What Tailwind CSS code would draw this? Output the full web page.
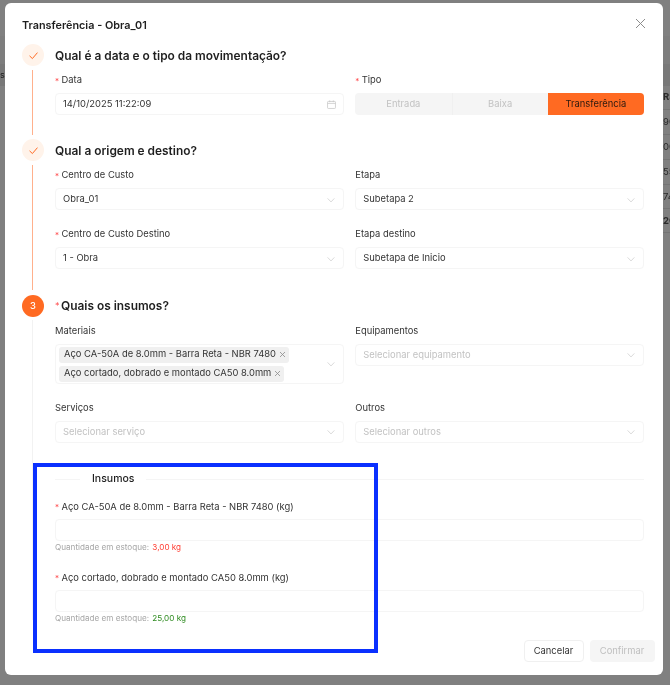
<!doctype html>
<html lang="pt-BR">
<head>
<meta charset="utf-8">
<script src="https://cdn.jsdelivr.net/npm/@tailwindcss/browser@4"></script>
<title>Transferência</title>
</head>
<body class="m-0 bg-[#808080] font-['Inter','Liberation_Sans',sans-serif]">
<div class="relative w-[670px] h-[685px] overflow-hidden bg-[#808080] blur-[0.3px]">
  <!-- page behind the modal -->
  <div class="absolute left-0 top-[36px] w-[670px] h-[28px] bg-[#7d7d7d]"></div>
  <div class="absolute left-0 top-[64px] w-[670px] h-[22px] bg-[#787878] text-[9px] leading-[22px] text-[#222]"><span class="absolute left-0">s</span></div>
  <div class="absolute left-[663px] top-[86px] w-[10px] flex flex-col text-[9.5px] text-[#2a2a2a]">
    <div class="h-[24px] leading-[22px] font-bold border-b border-[#747474]">R$</div>
    <div class="h-[25px] leading-[24px] border-b border-[#747474]">90</div>
    <div class="h-[25px] leading-[24px] border-b border-[#747474]">00</div>
    <div class="h-[25px] leading-[24px] border-b border-[#747474]">55</div>
    <div class="h-[24px] leading-[23px] border-b border-[#747474]">74</div>
    <div class="h-[24px] leading-[23px] font-bold border-b border-[#747474]">26</div>
  </div>

  <!-- modal -->
  <div class="absolute left-[5px] top-[3px] w-[658px] h-[672px] rounded-[6px] bg-white pl-[17px] pr-[19px] text-[#1f1f1f]">
    <div class="flex items-center justify-between h-[41px] pt-[3px]">
      <h1 class="text-[10.85px] font-semibold text-[#1f1f1f]">Transferência - Obra_01</h1>
      <svg class="mr-[-1.5px] -mt-[3px] w-[11px] h-[11px] text-[#8c8c8c]" viewBox="0 0 11 11" fill="none" stroke="currentColor" stroke-width="1"><path d="M1 1l9 9M10 1 1 10"/></svg>
    </div>

    <!-- step 1 -->
    <section class="flex gap-[11px] h-[95px]">
      <div class="flex flex-col w-[22px] shrink-0">
        <div class="w-[22px] h-[22px] rounded-full bg-[#fff3ea] flex items-center justify-center shrink-0">
          <svg class="w-[9px] h-[9px] text-[#ff6a22]" viewBox="0 0 10 10" fill="none" stroke="currentColor" stroke-width="1.1"><path d="M.6 5.4 3.8 8.4 9.4 1.8"/></svg>
        </div>
        <div class="w-px h-[65px] mt-[4px] ml-[10px] bg-[#ffb08c]"></div>
      </div>
      <div class="flex-1 min-w-0">
        <h2 class="h-[22px] leading-[23px] text-[11.9px] font-semibold text-[#1f1f1f]">Qual é a data e o tipo da movimentação?</h2>
        <div class="grid grid-cols-2 gap-x-[11.5px] mt-[7px]">
          <div>
            <label class="flex items-center h-[14px] pt-[1px] text-[9.4px] text-[#333]"><span class="text-[#ff4d4f] text-[8px] w-[6.5px]">*</span>Data</label>
            <div class="mt-[6px] flex items-center justify-between h-[22px] rounded-[4px] border border-[#f5f5f5] pt-[1px] pl-[7px] pr-[7px] text-[9.4px] text-[#333]">
              <span>14/10/2025 11:22:09</span>
              <svg class="w-[9px] h-[9px] text-[#c4c4c4]" viewBox="0 0 10 10" fill="none" stroke="currentColor" stroke-width=".8"><rect x=".6" y="1.6" width="8.8" height="7.8" rx=".8"/><path d="M.6 3.8h8.8M3 .4v2M7 .4v2"/></svg>
            </div>
          </div>
          <div>
            <label class="flex items-center h-[14px] pt-[1px] text-[9.4px] text-[#333]"><span class="text-[#ff4d4f] text-[8px] w-[6.5px]">*</span>Tipo</label>
            <div class="mt-[6px] grid grid-cols-3 h-[22px] rounded-[4px] overflow-hidden bg-[#f5f5f5] text-[9.4px] text-center leading-[21px]">
              <span class="text-[#c2c2c2]">Entrada</span>
              <span class="text-[#c2c2c2] border-l border-[#f0f0f0]">Baixa</span>
              <span class="bg-[#ff6a22] text-[#2b1a10]">Transferência</span>
            </div>
          </div>
        </div>
      </div>
    </section>

    <!-- step 2 -->
    <section class="flex gap-[11px] h-[156px]">
      <div class="flex flex-col w-[22px] shrink-0">
        <div class="w-[22px] h-[22px] rounded-full bg-[#fff3ea] flex items-center justify-center shrink-0">
          <svg class="w-[9px] h-[9px] text-[#ff6a22]" viewBox="0 0 10 10" fill="none" stroke="currentColor" stroke-width="1.1"><path d="M.6 5.4 3.8 8.4 9.4 1.8"/></svg>
        </div>
        <div class="w-px h-[125px] mt-[4px] ml-[10px] bg-[#ffb08c]"></div>
      </div>
      <div class="flex-1 min-w-0">
        <h2 class="h-[22px] leading-[23px] text-[11.9px] font-semibold text-[#1f1f1f]">Qual a origem e destino?</h2>
        <div class="grid grid-cols-2 gap-x-[11.5px] gap-y-[17px] mt-[7px]">
          <div>
            <label class="flex items-center h-[14px] pt-[1px] text-[9.4px] text-[#333]"><span class="text-[#ff4d4f] text-[8px] w-[6.5px]">*</span>Centro de Custo</label>
            <div class="mt-[6px] flex items-center justify-between h-[22px] rounded-[4px] border border-[#f5f5f5] pt-[1px] pl-[7px] pr-[8px] text-[9.4px] text-[#333]">
              <span>Obra_01</span>
              <svg class="w-[8px] h-[8px] text-[#cfcfcf]" viewBox="0 0 10 10" fill="none" stroke="currentColor" stroke-width="1"><path d="M.8 3 5 7.4 9.2 3"/></svg>
            </div>
          </div>
          <div>
            <label class="flex items-center h-[14px] pt-[1px] text-[9.4px] text-[#333]">Etapa</label>
            <div class="mt-[6px] flex items-center justify-between h-[22px] rounded-[4px] border border-[#f5f5f5] pt-[1px] pl-[7px] pr-[8px] text-[9.4px] text-[#333]">
              <span>Subetapa 2</span>
              <svg class="w-[8px] h-[8px] text-[#cfcfcf]" viewBox="0 0 10 10" fill="none" stroke="currentColor" stroke-width="1"><path d="M.8 3 5 7.4 9.2 3"/></svg>
            </div>
          </div>
          <div>
            <label class="flex items-center h-[14px] pt-[1px] text-[9.4px] text-[#333]"><span class="text-[#ff4d4f] text-[8px] w-[6.5px]">*</span>Centro de Custo Destino</label>
            <div class="mt-[6px] flex items-center justify-between h-[22px] rounded-[4px] border border-[#f5f5f5] pt-[1px] pl-[7px] pr-[8px] text-[9.4px] text-[#333]">
              <span>1 - Obra</span>
              <svg class="w-[8px] h-[8px] text-[#cfcfcf]" viewBox="0 0 10 10" fill="none" stroke="currentColor" stroke-width="1"><path d="M.8 3 5 7.4 9.2 3"/></svg>
            </div>
          </div>
          <div>
            <label class="flex items-center h-[14px] pt-[1px] text-[9.4px] text-[#333]">Etapa destino</label>
            <div class="mt-[6px] flex items-center justify-between h-[22px] rounded-[4px] border border-[#f5f5f5] pt-[1px] pl-[7px] pr-[8px] text-[9.4px] text-[#333]">
              <span>Subetapa de Inicio</span>
              <svg class="w-[8px] h-[8px] text-[#cfcfcf]" viewBox="0 0 10 10" fill="none" stroke="currentColor" stroke-width="1"><path d="M.8 3 5 7.4 9.2 3"/></svg>
            </div>
          </div>
        </div>
      </div>
    </section>

    <!-- step 3 -->
    <section class="flex gap-[11px]">
      <div class="flex flex-col w-[22px] shrink-0">
        <div class="w-[22px] h-[22px] rounded-full bg-[#ff6a22] text-white text-[9.4px] font-medium flex items-center justify-center shrink-0">3</div>
        <div class="w-px h-[300px] mt-[3px] ml-[10px] bg-[#f2f2f2]"></div>
      </div>
      <div class="flex-1 min-w-0">
        <h2 class="flex h-[22px] items-center text-[11.9px] font-semibold text-[#1f1f1f]"><span class="text-[#ff4d4f] font-normal w-[6px] text-[9px]">*</span>Quais os insumos?</h2>
        <div class="grid grid-cols-2 gap-x-[11.5px] gap-y-[17px] mt-[7px]">
          <div>
            <label class="flex items-center h-[14px] text-[9.4px] text-[#333]">Materiais</label>
            <div class="mt-[6px] flex items-center justify-between h-[40px] rounded-[4px] border border-[#f5f5f5] pl-[2.5px] pr-[8px] text-[9.4px] text-[#333]">
              <div class="flex flex-col items-start gap-[3px]">
                <span class="flex items-center h-[16px] rounded-[3px] bg-[#f0f0f0] pl-[5.5px] pr-[3px] whitespace-nowrap">Aço CA-50A de 8.0mm - Barra Reta - NBR 7480<svg class="ml-[3px] w-[7px] h-[7px] text-[#8c8c8c]" viewBox="0 0 7 7" fill="none" stroke="currentColor" stroke-width=".8"><path d="M1 1l5 5M6 1 1 6"/></svg></span>
                <span class="flex items-center h-[16px] rounded-[3px] bg-[#f0f0f0] pl-[5.5px] pr-[3px] whitespace-nowrap">Aço cortado, dobrado e montado CA50 8.0mm<svg class="ml-[3px] w-[7px] h-[7px] text-[#8c8c8c]" viewBox="0 0 7 7" fill="none" stroke="currentColor" stroke-width=".8"><path d="M1 1l5 5M6 1 1 6"/></svg></span>
              </div>
              <svg class="w-[8px] h-[8px] text-[#cfcfcf]" viewBox="0 0 10 10" fill="none" stroke="currentColor" stroke-width="1"><path d="M.8 3 5 7.4 9.2 3"/></svg>
            </div>
          </div>
          <div>
            <label class="flex items-center h-[14px] text-[9.4px] text-[#333]">Equipamentos</label>
            <div class="mt-[6px] flex items-center justify-between h-[22px] rounded-[4px] border border-[#f5f5f5] pl-[7px] pr-[8px] text-[9.4px] text-[#c2c2c2]">
              <span>Selecionar equipamento</span>
              <svg class="w-[8px] h-[8px] text-[#cfcfcf]" viewBox="0 0 10 10" fill="none" stroke="currentColor" stroke-width="1"><path d="M.8 3 5 7.4 9.2 3"/></svg>
            </div>
          </div>
          <div>
            <label class="flex items-center h-[14px] text-[9.4px] text-[#333]">Serviços</label>
            <div class="mt-[6px] flex items-center justify-between h-[22px] rounded-[4px] border border-[#f5f5f5] pl-[7px] pr-[8px] text-[9.4px] text-[#c2c2c2]">
              <span>Selecionar serviço</span>
              <svg class="w-[8px] h-[8px] text-[#cfcfcf]" viewBox="0 0 10 10" fill="none" stroke="currentColor" stroke-width="1"><path d="M.8 3 5 7.4 9.2 3"/></svg>
            </div>
          </div>
          <div>
            <label class="flex items-center h-[14px] text-[9.4px] text-[#333]">Outros</label>
            <div class="mt-[6px] flex items-center justify-between h-[22px] rounded-[4px] border border-[#f5f5f5] pl-[7px] pr-[8px] text-[9.4px] text-[#c2c2c2]">
              <span>Selecionar outros</span>
              <svg class="w-[8px] h-[8px] text-[#cfcfcf]" viewBox="0 0 10 10" fill="none" stroke="currentColor" stroke-width="1"><path d="M.8 3 5 7.4 9.2 3"/></svg>
            </div>
          </div>
        </div>

        <div class="flex items-center h-[14px] mt-[29px] text-[10.5px] font-medium text-[#1f1f1f]">
          <div class="w-[25px] h-px bg-[#f5f5f5]"></div>
          <span class="px-[12px]">Insumos</span>
          <div class="flex-1 h-px bg-[#f5f5f5]"></div>
        </div>

        <div class="mt-[14px]">
          <label class="flex items-center h-[14px] text-[9.4px] text-[#333]"><span class="text-[#ff4d4f] text-[8px] w-[6.5px]">*</span>Aço CA-50A de 8.0mm - Barra Reta - NBR 7480 (kg)</label>
          <div class="mt-[5px] h-[22px] rounded-[4px] border border-[#f5f5f5]"></div>
          <p class="mt-[1px] h-[10px] leading-[10px] text-[8.15px] text-[#a6a6a6]">Quantidade em estoque: <span class="ml-[1px] text-[#ff3b30]">3,00 kg</span></p>
        </div>
        <div class="mt-[19px]">
          <label class="flex items-center h-[14px] text-[9.4px] text-[#333]"><span class="text-[#ff4d4f] text-[8px] w-[6.5px]">*</span>Aço cortado, dobrado e montado CA50 8.0mm (kg)</label>
          <div class="mt-[5px] h-[22px] rounded-[4px] border border-[#f5f5f5]"></div>
          <p class="mt-[1px] h-[10px] leading-[10px] text-[8.15px] text-[#a6a6a6]">Quantidade em estoque: <span class="ml-[1px] text-[#2e8b20]">25,00 kg</span></p>
        </div>
      </div>
    </section>

    <!-- footer -->
    <div class="absolute right-[8.5px] bottom-[13px] flex gap-[6px] text-[9.4px]">
      <button class="w-[60px] h-[22px] rounded-[4px] border border-[#f0f0f0] bg-white text-[#333]">Cancelar</button>
      <button class="w-[65px] h-[22px] rounded-[4px] bg-[#f5f5f5] text-[#bfbfbf]">Confirmar</button>
    </div>
  </div>

  <!-- annotation -->
  <div class="absolute left-[33px] top-[463px] w-[345px] h-[190px] border-[4px] border-[#0a30ff] pointer-events-none"></div>
</div>
</body>
</html>
